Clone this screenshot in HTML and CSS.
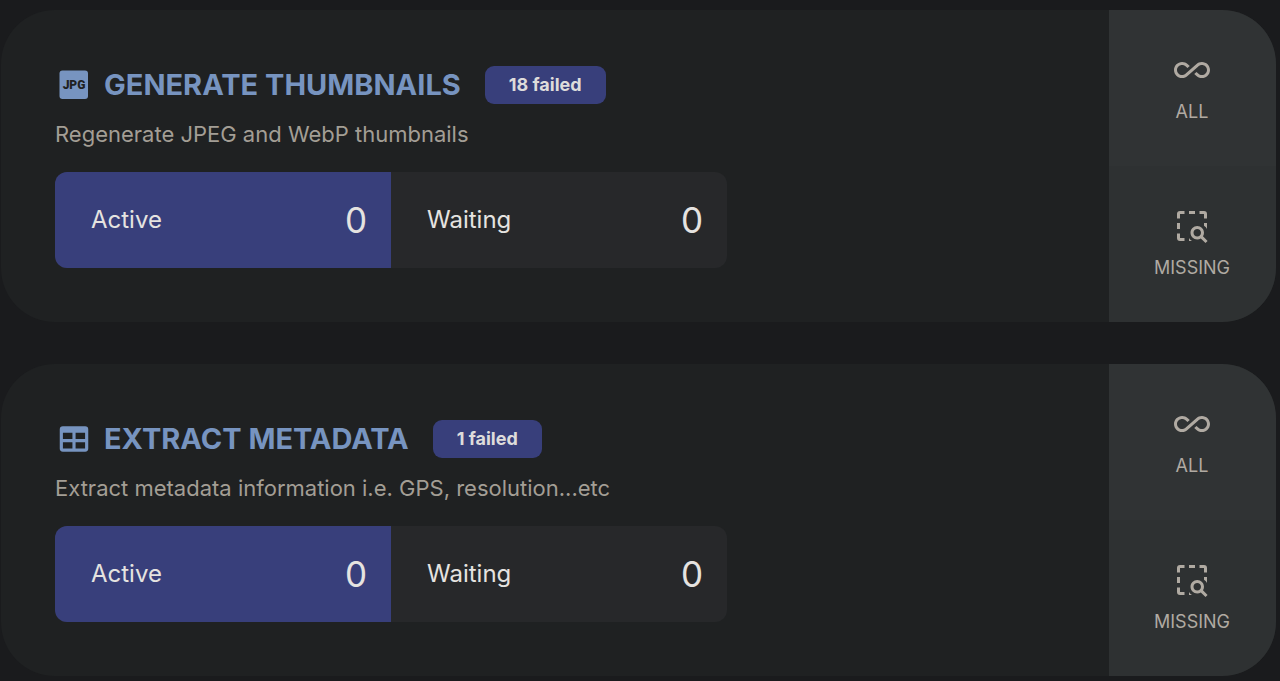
FILE: index.html
```html
<!DOCTYPE html>
<html lang="en">
<head>
<meta charset="utf-8">
<meta name="viewport" content="width=device-width, initial-scale=1">
<title>Jobs</title>
<link rel="stylesheet" href="styles.css">
</head>
<body>
<svg class="sprite" aria-hidden="true">
  <symbol id="icon-all" viewBox="0 0 24 24">
    <path d="M18.6,6.62C17.16,6.62 15.8,7.18 14.83,8.15L7.8,14.39C7.16,15.03 6.31,15.38 5.4,15.38C3.53,15.38 2,13.87 2,12C2,10.13 3.53,8.62 5.4,8.62C6.31,8.62 7.16,8.97 7.84,9.65L8.97,10.65L10.5,9.31L9.22,8.2C8.2,7.18 6.84,6.62 5.4,6.62C2.42,6.62 0,9.04 0,12C0,14.96 2.42,17.38 5.4,17.38C6.84,17.38 8.2,16.82 9.17,15.85L16.2,9.61C16.84,8.97 17.69,8.62 18.6,8.62C20.47,8.62 22,10.13 22,12C22,13.87 20.47,15.38 18.6,15.38C17.7,15.38 16.84,15.03 16.16,14.35L15,13.34L13.5,14.68L14.78,15.8C15.8,16.81 17.15,17.37 18.6,17.37C21.58,17.37 24,14.96 24,12C24,9 21.58,6.62 18.6,6.62Z"/>
  </symbol>
  <symbol id="icon-missing" viewBox="0 0 24 24">
    <path d="M4 2H7V4H4V7H2V4A2 2 0 0 1 4 2M10 2H14V4H10ZM17 2H20A2 2 0 0 1 22 4V7H20V4H17ZM2 10H4V14H2ZM2 17H4V20H7V22H4A2 2 0 0 1 2 20ZM20 10H22V14Q21.5 12.6 20 11.8ZM10 20Q10.7 21.2 12 22H10Z"/>
    <path d="M19.31 18.9C19.75 18.21 20 17.38 20 16.5C20 14 18 12 15.5 12S11 14 11 16.5 13 21 15.5 21C16.37 21 17.19 20.75 17.88 20.32L21 23.39L22.39 22L19.31 18.9M15.5 19C14.12 19 13 17.88 13 16.5S14.12 14 15.5 14 18 15.12 18 16.5 16.88 19 15.5 19Z"/>
  </symbol>
  <symbol id="icon-table" viewBox="0 0 24 24">
    <path d="M5,4H19A2,2 0 0,1 21,6V18A2,2 0 0,1 19,20H5A2,2 0 0,1 3,18V6A2,2 0 0,1 5,4M5,8V12H11V8H5M13,8V12H19V8H13M5,14V18H11V14H5M13,14V18H19V14H13Z"/>
  </symbol>
</svg>
<main class="jobs">
  <section class="card">
    <div class="body">
      <header class="head">
        <svg class="head-icon" viewBox="0 0 38 38" aria-hidden="true">
          <rect x="4.5" y="4.5" width="28.5" height="28.5" rx="3"/>
          <text class="icon-text" x="19" y="23" text-anchor="middle">JPG</text>
        </svg>
        <h2 class="title">GENERATE THUMBNAILS</h2>
        <span class="badge">18 failed</span>
      </header>
      <p class="desc">Regenerate JPEG and WebP thumbnails</p>
      <dl class="stats">
        <div class="stat active"><dt>Active</dt><dd>0</dd></div>
        <div class="stat"><dt>Waiting</dt><dd>0</dd></div>
      </dl>
    </div>
    <div class="actions">
      <button class="action first" type="button"><svg class="action-icon" aria-hidden="true"><use href="#icon-all"/></svg>ALL</button>
      <button class="action" type="button"><svg class="action-icon" aria-hidden="true"><use href="#icon-missing"/></svg>MISSING</button>
    </div>
  </section>
  <section class="card">
    <div class="body">
      <header class="head">
        <svg class="head-icon" aria-hidden="true"><use href="#icon-table"/></svg>
        <h2 class="title">EXTRACT METADATA</h2>
        <span class="badge">1 failed</span>
      </header>
      <p class="desc">Extract metadata information i.e. GPS, resolution...etc</p>
      <dl class="stats">
        <div class="stat active"><dt>Active</dt><dd>0</dd></div>
        <div class="stat"><dt>Waiting</dt><dd>0</dd></div>
      </dl>
    </div>
    <div class="actions">
      <button class="action first" type="button"><svg class="action-icon" aria-hidden="true"><use href="#icon-all"/></svg>ALL</button>
      <button class="action" type="button"><svg class="action-icon" aria-hidden="true"><use href="#icon-missing"/></svg>MISSING</button>
    </div>
  </section>
</main>
</body>
</html>
```
FILE: styles.css
```css
* { box-sizing: border-box; }
body {
  margin: 0;
  background: #1a1b1d;
  color: #e5e3e0;
  font-family: Inter, "Liberation Sans", sans-serif;
}
.sprite { display: none; }
svg { fill: currentColor; }
.jobs {
  display: flex;
  flex-direction: column;
  gap: 42px;
  padding: 10px 4px 4px 1px;
}
.card {
  display: flex;
  border-radius: 54px;
  overflow: hidden;
  background: #1f2122;
}
.body { flex: 1; min-width: 0; padding: 54px; }
.head {
  display: flex;
  align-items: center;
  min-height: 42px;
  color: #7794c0;
}
.head-icon { width: 38px; height: 38px; flex: none; }
.icon-text {
  fill: #1f2122;
  font: 900 12px Roboto, sans-serif;
}
.title {
  margin: 0 24px 0 11px;
  font-size: 29px;
  line-height: 42px;
  font-weight: 700;
}
.badge {
  padding: 0 24px;
  border-radius: 9px;
  background: #383f7b;
  color: #dedcdb;
  font-size: 18px;
  line-height: 38px;
  font-weight: 700;
}
.desc {
  margin: 12px 0 22px;
  color: #a39e95;
  font-size: 22px;
  line-height: 32px;
}
.stats {
  display: flex;
  max-width: 672px;
  margin: 0;
  border-radius: 12px;
  overflow: hidden;
  background: #27282a;
}
.stat {
  flex: 1;
  display: flex;
  align-items: center;
  justify-content: space-between;
  padding: 24px 24px 24px 36px;
  line-height: 48px;
}
.active { background: #383f7b; }
.stat dt { font-size: 24px; }
.stat dd { margin: 0; font-size: 35px; }
.actions { display: flex; flex-direction: column; width: 167px; }
.action {
  flex: 1;
  display: flex;
  flex-direction: column;
  align-items: center;
  justify-content: center;
  gap: 12px;
  border: 0;
  padding: 0 1px 0 0;
  background: #2e3132;
  color: #b0aaa2;
  font-family: inherit;
  font-size: 18px;
  line-height: 24px;
}
.first { background: #303334; }
.action-icon { width: 36px; height: 36px; }
```
